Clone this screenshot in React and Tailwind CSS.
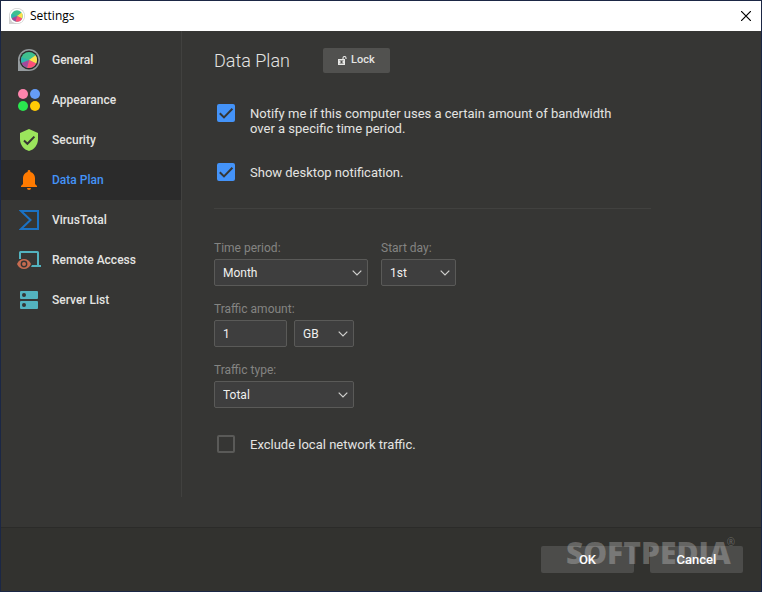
import { useState } from 'react'

function GlassLogo({ className, rim, face, ring }) {
  return (
    <svg viewBox="0 0 22 22" className={className} aria-hidden="true">
      <path d="M0 22V11A11 11 0 1 1 11 22Z" fill={rim} />
      <circle cx="11" cy="11" r={ring} fill={face} />
      <circle cx="11" cy="11" r="8" fill="#3fc08f" />
      <path d="M11 11L3.600 14A8 8 0 0 1 3.600 8Z" fill="#2fb5ae" />
      <path d="M11 11L17.500 6.300A8 8 0 0 1 18.200 14.500Z" fill="#ffe14d" />
      <path d="M11 11L18.200 14.500A8 8 0 0 1 9 18.700Z" fill="#ff4f78" />
      <path d="M11 11L9 18.700A8 8 0 0 1 3.600 14Z" fill="#a3489c" />
    </svg>
  )
}

function GeneralIcon() {
  return <GlassLogo className="h-[22px] w-[22px]" rim="#949a9d" face="#2b2b2b" ring="9.4" />
}

function AppearanceIcon() {
  return (
    <svg viewBox="0 0 22 22" className="h-[22px] w-[22px]" aria-hidden="true">
      <circle cx="5" cy="5" r="5" fill="#ff85ad" />
      <circle cx="17" cy="5" r="5" fill="#659cf6" />
      <circle cx="5" cy="17" r="5" fill="#2ae84f" />
      <circle cx="17" cy="17" r="5" fill="#ffcb05" />
    </svg>
  )
}

function SecurityIcon() {
  return (
    <svg viewBox="0 0 18 22" className="h-[22px] w-[18px]" aria-hidden="true">
      <path d="M9 0L18 4V10C18 16 14.2 20.6 9 22C3.800 20.600 0 16 0 10V4Z" fill="#9be55c" />
      <path d="M4 11.500L7.400 14.800L14.400 7.600" fill="none" stroke="#363634" strokeWidth="2" />
    </svg>
  )
}

function BellIcon() {
  return (
    <svg viewBox="0 0 16 20" className="h-5 w-4" aria-hidden="true">
      <path
        d="M6.600 1.400a1.400 1.400 0 0 1 2.800 0v.7C12.200 2.800 14 5.200 14 8v6l2 2v1H0v-1l2-2V8c0-2.800 1.800-5.200 4.600-5.900zM6 18h4a2 2 0 0 1-4 0z"
        fill="#ff7a00"
      />
    </svg>
  )
}

function VirusTotalIcon() {
  return (
    <svg viewBox="0 0 20 20" className="h-5 w-5" aria-hidden="true">
      <path d="M2 1H19V19H2L11.500 10Z" fill="none" stroke="#1b72c4" strokeWidth="2" />
    </svg>
  )
}

function RemoteIcon() {
  return (
    <svg viewBox="0 0 24 18" className="h-[18px] w-6" aria-hidden="true">
      <path d="M3 8V1.500Q3 1 3.500 1H20.500Q21 1 21 1.500V14" fill="none" stroke="#53b3bf" strokeWidth="2" />
      <path d="M15 14H24V16H14Z" fill="#53b3bf" />
      <path d="M0 13C1.500 9.500 4 8 7 8S12.500 9.500 14 13C12.500 16.500 10 18 7 18S1.500 16.500 0 13Z" fill="#c66b50" />
      <circle cx="7" cy="13" r="2.700" fill="none" stroke="#363634" strokeWidth="1.400" />
    </svg>
  )
}

function ServerIcon() {
  return (
    <svg viewBox="0 0 18 18" className="h-[18px] w-[18px]" aria-hidden="true">
      <rect width="18" height="8" rx="1" fill="#53b3bf" />
      <rect y="10" width="18" height="8" rx="1" fill="#53b3bf" />
      <circle cx="4" cy="4" r="2" fill="#363634" />
      <circle cx="4" cy="14" r="2" fill="#363634" />
    </svg>
  )
}

const sections = [
  { name: 'General', icon: GeneralIcon },
  { name: 'Appearance', icon: AppearanceIcon },
  { name: 'Security', icon: SecurityIcon },
  { name: 'Data Plan', icon: BellIcon },
  { name: 'VirusTotal', icon: VirusTotalIcon },
  { name: 'Remote Access', icon: RemoteIcon },
  { name: 'Server List', icon: ServerIcon },
]

function Sidebar({ active, onSelect }) {
  return (
    <nav className="w-[181px] shrink-0 border-r border-[#41413f] pt-[9px]">
      {sections.map(({ name, icon: Icon }) => (
        <button
          key={name}
          type="button"
          onClick={() => onSelect(name)}
          className={`flex h-10 w-full items-center gap-[11px] pl-4 text-left text-[12px] font-medium ${
            active === name ? 'bg-[#2b2b2b] text-[#4493f8]' : 'text-[#e4e4e2]'
          }`}
        >
          <span className="flex w-6 justify-center">
            <Icon />
          </span>
          {name}
        </button>
      ))}
    </nav>
  )
}

function Checkbox({ label, defaultChecked }) {
  return (
    <label className="flex items-start gap-[15px] pl-[3px] text-[13px] leading-[15px]">
      <span className="grid shrink-0">
        <input
          type="checkbox"
          defaultChecked={defaultChecked}
          className="peer col-start-1 row-start-1 h-[18px] w-[18px] appearance-none rounded-xs border-2 border-[#5a5a58] checked:border-[#4493f8] checked:bg-[#4493f8]"
        />
        <svg
          viewBox="0 0 18 18"
          className="pointer-events-none invisible col-start-1 row-start-1 h-[18px] w-[18px] peer-checked:visible"
          aria-hidden="true"
        >
          <path d="M2.800 9.200L7 13.400L15.400 4.800" fill="none" stroke="#363634" strokeWidth="2" />
        </svg>
      </span>
      <span className="pt-[2px]">{label}</span>
    </label>
  )
}

function Field({ id, label, children }) {
  return (
    <div className="flex flex-col gap-[3px]">
      <label htmlFor={id} className="text-[12px] leading-[15px] text-[#848482]">
        {label}
      </label>
      {children}
    </div>
  )
}

function Select({ id, width, options, ariaLabel }) {
  return (
    <div className={`grid items-center ${width}`}>
      <select
        id={id}
        aria-label={ariaLabel}
        className="col-start-1 row-start-1 h-[27px] w-full appearance-none rounded-xs border border-[#5a5a58] bg-[#3e3e3e] pl-2 text-[12px] text-[#f0f0ee]"
      >
        {options.map((option) => (
          <option key={option}>{option}</option>
        ))}
      </select>
      <svg
        viewBox="0 0 10 6"
        className="pointer-events-none col-start-1 row-start-1 mr-[6px] h-[6px] w-[10px] justify-self-end"
        aria-hidden="true"
      >
        <path d="M0.700 0.700L5 5L9.300 0.700" fill="none" stroke="#d0d0ce" strokeWidth="1.200" />
      </svg>
    </div>
  )
}

function DataPlan() {
  return (
    <main className="flex-1 pt-[17px] pr-8 pl-8">
      <div className="flex items-center gap-[33px]">
        <h1 className="text-[18px] leading-[25px] font-light">Data Plan</h1>
        <button
          type="button"
          className="flex h-[25px] w-[67px] items-center justify-center gap-1 rounded-xs bg-[#51514f] text-[11px] font-medium"
        >
          <svg viewBox="0 0 9 9" className="h-[9px] w-[9px]" aria-hidden="true">
            <path d="M5 3.500V2A1.500 1.500 0 0 1 8 2V3" fill="none" stroke="#e8e8e6" strokeWidth="1.100" />
            <path d="M0.750 3.750H6.250V8.250H0.750Z" fill="none" stroke="#e8e8e6" strokeWidth="1.500" />
            <path d="M1 5H2.500V7H1ZM4.500 5H6V7H4.500Z" fill="#e8e8e6" />
          </svg>
          Lock
        </button>
      </div>

      <div className="mt-[31px] flex max-w-[437px] flex-col gap-[27px] border-b border-[#41413f] pb-[27px]">
        <div className="max-w-[400px]">
          <Checkbox
            defaultChecked
            label="Notify me if this computer uses a certain amount of bandwidth over a specific time period."
          />
        </div>
        <Checkbox defaultChecked label="Show desktop notification." />
      </div>

      <div className="mt-8 flex flex-col gap-4">
        <div className="flex gap-[13px]">
          <Field id="period" label="Time period:">
            <Select id="period" width="w-[154px]" options={['Month', 'Week', 'Day']} />
          </Field>
          <Field id="start" label="Start day:">
            <Select id="start" width="w-[75px]" options={['1st', '2nd', '3rd']} />
          </Field>
        </div>
        <Field id="amount" label="Traffic amount:">
          <div className="flex gap-[7px]">
            <input
              id="amount"
              type="text"
              defaultValue="1"
              className="h-[27px] w-[73px] rounded-xs border border-[#5a5a58] bg-[#3e3e3e] px-2 text-[12px] text-[#f0f0ee]"
            />
            <Select id="unit" ariaLabel="Unit" width="w-[60px]" options={['GB', 'MB']} />
          </div>
        </Field>
        <Field id="type" label="Traffic type:">
          <Select id="type" width="w-[140px]" options={['Total', 'Download', 'Upload']} />
        </Field>
      </div>

      <div className="mt-[27px]">
        <Checkbox label="Exclude local network traffic." />
      </div>
    </main>
  )
}

export default function App() {
  const [active, setActive] = useState('Data Plan')

  return (
    <div className="flex min-h-screen flex-col border border-[#1b2745] bg-[#363634] font-['Roboto',sans-serif] text-[#e4e4e2]">
      <header className="flex h-[30px] items-center justify-between bg-white pr-[10px] pl-2 text-black">
        <div className="flex items-center gap-[5px] font-['Open_Sans',sans-serif] text-[12px]">
          <GlassLogo className="h-4 w-4" rim="#d2d2d2" face="#ffffff" ring="10" />
          Settings
        </div>
        <button type="button" aria-label="Close">
          <svg viewBox="0 0 10 10" className="h-[10px] w-[10px]" aria-hidden="true">
            <path d="M0 0L10 10M10 0L0 10" stroke="#000" strokeWidth="1.200" />
          </svg>
        </button>
      </header>

      <div className="flex flex-1 pb-[30px]">
        <Sidebar active={active} onSelect={setActive} />
        <DataPlan />
      </div>

      <footer className="relative flex justify-end gap-4 border-t border-[#2b2b29] bg-[#32322f] p-[18px]">
        <button type="button" className="h-[27px] w-[93px] rounded-xs bg-[#4c4c4a] text-[13px] font-medium text-white">
          OK
        </button>
        <button type="button" className="h-[27px] w-[93px] rounded-xs bg-[#4c4c4a] text-[13px] font-medium text-white">
          Cancel
        </button>
        <div className="pointer-events-none absolute top-[9px] right-[26px] flex items-start font-['Open_Sans',sans-serif] text-white/25">
          <span className="text-[30px] leading-[32px] font-extrabold">SOFTPEDIA</span>
          <span className="-ml-1 text-[10px] leading-[10px]">®</span>
        </div>
      </footer>
    </div>
  )
}
